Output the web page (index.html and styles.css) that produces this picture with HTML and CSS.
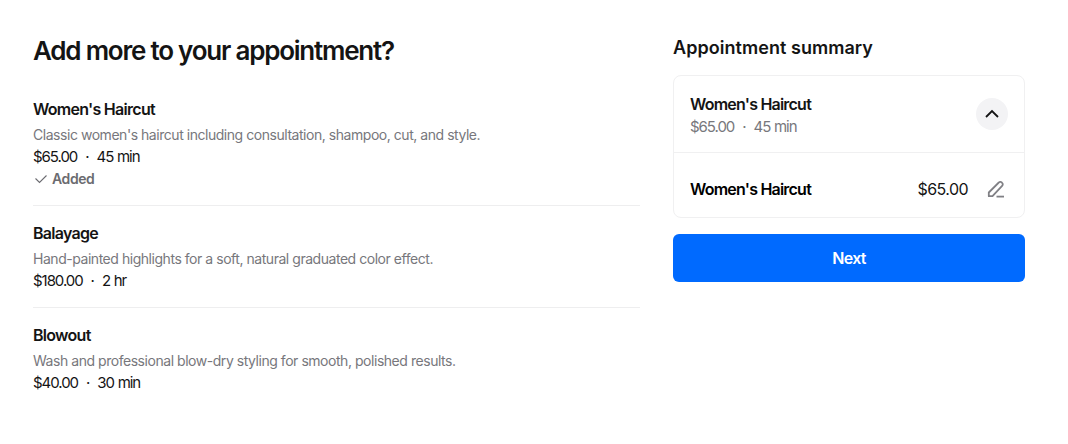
FILE: index.html
```html
<!DOCTYPE html>
<html lang="en">
<head>
<meta charset="utf-8">
<title>Add more to your appointment?</title>
<link rel="stylesheet" href="styles.css">
</head>
<body>
<main class="page">
  <section class="services">
    <h1 class="title">Add more to your appointment?</h1>
    <ul class="list">
      <li class="service">
        <h2 class="service-name">Women's Haircut</h2>
        <p class="service-desc">Classic women's haircut including consultation, shampoo, cut, and style.</p>
        <p class="service-meta"><span>$65.00</span><span class="dot">·</span><span>45 min</span></p>
        <p class="added">
          <svg class="check" width="14" height="14" viewBox="0 0 14 14" fill="none"><path d="M1.5 6.5 L5.5 10.5 L12.5 3.5" stroke="#6b6b70" stroke-width="1.1"/></svg>
          <span>Added</span>
        </p>
      </li>
      <li class="service">
        <h2 class="service-name">Balayage</h2>
        <p class="service-desc">Hand-painted highlights for a soft, natural graduated color effect.</p>
        <p class="service-meta"><span>$180.00</span><span class="dot">·</span><span>2 hr</span></p>
      </li>
      <li class="service">
        <h2 class="service-name">Blowout</h2>
        <p class="service-desc">Wash and professional blow-dry styling for smooth, polished results.</p>
        <p class="service-meta"><span>$40.00</span><span class="dot">·</span><span>30 min</span></p>
      </li>
    </ul>
  </section>
  <aside class="summary">
    <h2 class="summary-title">Appointment summary</h2>
    <div class="card">
      <div class="card-head">
        <div>
          <div class="card-name">Women's Haircut</div>
          <div class="card-meta"><span>$65.00</span><span class="dot">·</span><span>45 min</span></div>
        </div>
        <button class="toggle" aria-label="Collapse">
          <svg width="16" height="16" viewBox="0 0 16 16" fill="none"><path d="M2 11 L8 5 L14 11" stroke="#141414" stroke-width="1.8"/></svg>
        </button>
      </div>
      <div class="card-row">
        <span class="row-name">Women's Haircut</span>
        <span class="row-price">$65.00</span>
        <svg class="edit" width="18" height="18" viewBox="0 0 18 18" fill="none"><path d="M1.8 16.2 V12.5 L11.8 2.5 a2 2 0 0 1 3 0 l.3 .3 a2 2 0 0 1 0 3 L5.5 16.2 Z" stroke="#808085" stroke-width="1.8" stroke-linejoin="round"/><path d="M9.5 16.6 H17" stroke="#808085" stroke-width="1.8"/></svg>
      </div>
    </div>
    <button class="next">Next</button>
  </aside>
</main>
</body>
</html>
```
FILE: styles.css
```css
* { box-sizing: border-box; }
html, body { margin: 0; background: #fff; }
body { font-family: Inter, "Liberation Sans", sans-serif; color: #141414; }
h1, h2, p, ul { margin: 0; padding: 0; }
ul { list-style: none; }
.page { display: grid; grid-template-columns: 607px 352px; column-gap: 33px; padding: 33px 0 0 33px; }
.title { font-size: 26px; line-height: 36px; font-weight: 600; letter-spacing: -1.22px; }
.list { margin-top: 13px; }
.service { padding: 16px 0 15px; border-bottom: 1px solid #eeeeef; }
.service:last-child { border-bottom: 0; }
.service-name { font-size: 16px; line-height: 22px; font-weight: 600; margin-bottom: 4px; letter-spacing: -0.72px; }
.service-desc { font-size: 14px; line-height: 22px; color: #77777c; letter-spacing: -0.46px; }
.service-meta { font-size: 15px; line-height: 22px; letter-spacing: -1.05px; word-spacing: 0.6px; }
.dot { margin: 0 8px; }
.added { display: flex; align-items: center; gap: 4px; font-size: 14px; line-height: 22px; font-weight: 600; color: #6b6b70; letter-spacing: -0.4px; }
.check { margin-left: 1px; }
.summary { padding-top: 2px; }
.summary-title { font-size: 18px; line-height: 26px; font-weight: 600; letter-spacing: 0.05px; }
.card { margin-top: 14px; border: 1px solid #f0f0f1; border-radius: 8px; }
.card-head { display: flex; align-items: center; justify-content: space-between; padding: 17px 16px 14px; border-bottom: 1px solid #f0f0f1; }
.card-name { font-size: 16px; line-height: 22px; font-weight: 600; letter-spacing: -0.78px; margin-bottom: 1px; }
.card-meta { font-size: 15px; line-height: 22px; color: #77777c; letter-spacing: -1.05px; word-spacing: 0.6px; }
.toggle { width: 32px; height: 32px; margin-top: -3px; border: 0; border-radius: 50%; background: #f3f3f5; padding: 0; display: flex; align-items: center; justify-content: center; }
.card-row { display: flex; align-items: center; padding: 23px 19px 15px 16px; }
.row-name { font-size: 16px; line-height: 26px; font-weight: 600; flex: 1; color: #000; letter-spacing: -0.78px; }
.row-price { font-size: 16px; line-height: 26px; margin-right: 19px; letter-spacing: -0.55px; }
.next { display: block; width: 100%; height: 48px; margin-top: 16px; border: 0; border-radius: 6px; background: #006aff; color: #fff; font: 600 16px/22px Inter, "Liberation Sans", sans-serif; letter-spacing: -0.68px; }
```
